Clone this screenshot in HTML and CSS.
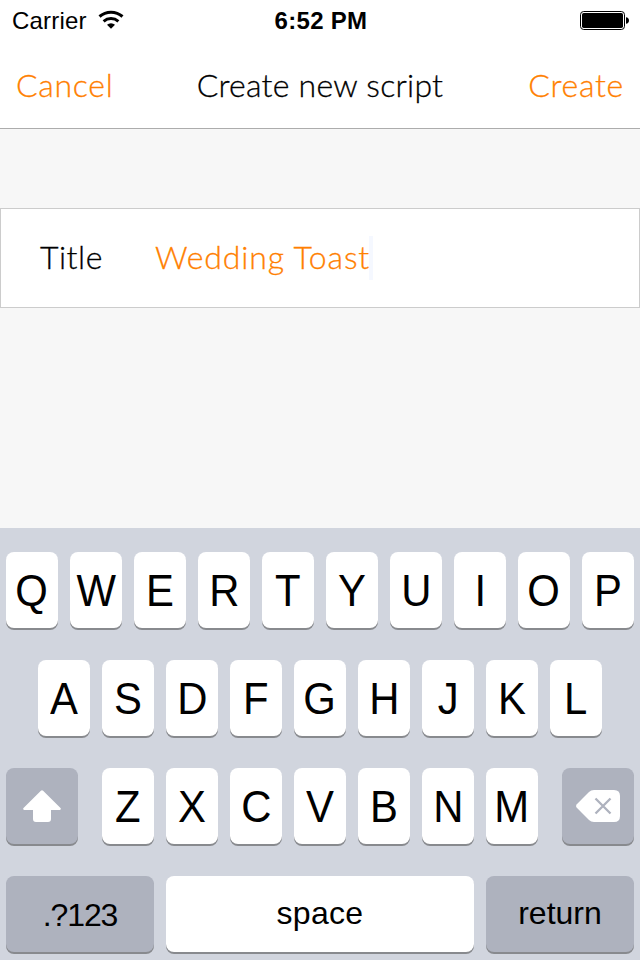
FILE: index.html
```html
<!DOCTYPE html>
<html lang="en">
<head>
<meta charset="utf-8">
<title>Create new script</title>
<link rel="stylesheet" href="styles.css">
</head>
<body>
<header class="top">
  <div class="status">
    <div class="carrier"><span class="carrier-name">Carrier</span>
      <svg class="wifi" width="26" height="20" viewBox="0 0 26 20"><g fill="none" stroke="#000" stroke-width="3"><path d="M1.500 6.500a17.500 17.500 0 0 1 23 0"/><path d="M5.600 11.300a11.500 11.500 0 0 1 14.800 0"/></g><path d="M13 18.800l-4-4.100a6 6 0 0 1 8 0z"/></svg>
    </div>
    <span class="time">6:52 PM</span>
    <svg class="battery" width="50" height="20" viewBox="0 0 50 20"><rect x=".5" y=".5" width="44" height="18" rx="3.2" fill="#fff" stroke="#000"/><rect x="2" y="2" width="41" height="15" rx="1.7"/><path d="M46 6.2c1.8.2 3 1.4 3 3.3s-1.2 3.100-3 3.300z"/></svg>
  </div>
  <nav class="nav"><span class="action cancel">Cancel</span><h1 class="heading">Create new script</h1><span class="action create">Create</span></nav>
</header>
<main class="content">
  <div class="field"><span class="label">Title</span><span class="value">Wedding Toast</span><span class="caret"></span></div>
</main>
<section class="keyboard">
  <div class="row"><span class="key"><span class="cap">Q</span></span><span class="key"><span class="cap">W</span></span><span class="key"><span class="cap">E</span></span><span class="key"><span class="cap">R</span></span><span class="key"><span class="cap">T</span></span><span class="key"><span class="cap">Y</span></span><span class="key"><span class="cap">U</span></span><span class="key"><span class="cap">I</span></span><span class="key"><span class="cap">O</span></span><span class="key"><span class="cap">P</span></span></div>
  <div class="row"><span class="key"><span class="cap">A</span></span><span class="key"><span class="cap">S</span></span><span class="key"><span class="cap">D</span></span><span class="key"><span class="cap">F</span></span><span class="key"><span class="cap">G</span></span><span class="key"><span class="cap">H</span></span><span class="key"><span class="cap">J</span></span><span class="key"><span class="cap">K</span></span><span class="key"><span class="cap">L</span></span></div>
  <div class="row spread">
    <span class="key dark"><svg width="38" height="32" viewBox="0 0 38 32"><path fill="#fff" d="M17.900.7q1.100-1 2.200 0L37.500 18q1 1.700-.7 2H28v9q0 3-3 3H13q-3 0-3-3v-9H1.200Q-.500 19.700.5 18z"/></svg></span>
    <div class="letters"><span class="key"><span class="cap">Z</span></span><span class="key"><span class="cap">X</span></span><span class="key"><span class="cap">C</span></span><span class="key"><span class="cap">V</span></span><span class="key"><span class="cap">B</span></span><span class="key"><span class="cap">N</span></span><span class="key"><span class="cap">M</span></span></div>
    <span class="key dark"><svg width="44" height="32" viewBox="0 0 44 32"><path fill="#fff" d="M18 0H38q6 0 6 6V26q0 6-6 6H18q-3 0-5-2L.8 17.800Q-.7 16 .8 14.200L13 2q2-2 5-2z"/><path d="M19.500 8.500l15 15m0-15l-15 15" stroke="#aeb2be" stroke-width="2.300"/></svg></span>
  </div>
  <div class="row"><span class="key dark word numbers">.?123</span><span class="key word space">space</span><span class="key dark word return">return</span></div>
</section>
</body>
</html>
```
FILE: styles.css
```css
* { box-sizing: border-box; }
body {
  margin: 0;
  width: 640px;
  height: 960px;
  display: flex;
  flex-direction: column;
  overflow: hidden;
  background: #f7f7f7;
  color: #000;
  font-family: "Liberation Sans", Arial, sans-serif;
}
.top { height: 129px; background: #fff; border-bottom: 1px solid #acacac; }
.status {
  height: 40px;
  display: grid;
  grid-template-columns: 1fr auto 1fr;
  align-items: center;
  padding: 0 10px 0 12px;
  font-size: 24px;
}
.carrier { display: flex; align-items: center; gap: 11px; }
.carrier-name { letter-spacing: 0.200px; padding-top: 2px; }
.time { font-weight: 700; font-size: 24px; letter-spacing: 0.300px; padding-top: 2px; }
.wifi { margin-bottom: 1px; }
.battery { justify-self: end; margin-top: 1px; }
.nav {
  height: 88px;
  padding: 0 16px;
  display: grid;
  grid-template-columns: 1fr auto 1fr;
  align-items: center;
  font-family: Lato, sans-serif;
  font-weight: 300;
  font-size: 32px;
  white-space: nowrap;
  -webkit-text-stroke: 0.300px currentColor;
}
.heading { margin: 0; font: inherit; letter-spacing: 0.250px; }
.action { color: #ff8000; letter-spacing: 0.700px; }
.create { justify-self: end; }
.content { height: 399px; padding-top: 79px; }
.field {
  height: 100px;
  display: flex;
  align-items: center;
  padding-left: 39px;
  background: #fff;
  border: 1px solid #ccc;
  font-family: Lato, sans-serif;
  font-weight: 300;
  font-size: 32px;
  letter-spacing: 0.700px;
  white-space: nowrap;
  -webkit-text-stroke: 0.300px currentColor;
}
.label { width: 115px; padding-bottom: 4px; letter-spacing: 0.500px; }
.value { width: 214px; padding-bottom: 4px; color: #ff8000; letter-spacing: 0.850px; }
.caret { width: 4px; height: 44px; background: #f5f8ff; }
.keyboard {
  height: 432px;
  padding: 24px 6px 0;
  display: flex;
  flex-direction: column;
  gap: 32px;
  background: #d1d5de;
}
.row, .letters { display: flex; justify-content: center; gap: 12px; }
.spread { justify-content: space-between; }
.key {
  width: 52px;
  height: 76px;
  display: flex;
  align-items: center;
  justify-content: center;
  border-radius: 8px;
  background: #fff;
  box-shadow: 0 2px 0 #888a8e;
  font-size: 45px;
  line-height: 76px;
}
.cap { padding-top: 2px; transform: scaleX(0.93); }
.dark { width: 72px; background: #aeb2be; }
.word { font-size: 32px; padding-bottom: 3px; }
.numbers, .return { width: 148px; }
.numbers { padding: 2px 0 0; letter-spacing: -1.100px; }
.space { width: 308px; letter-spacing: 0.300px; }
```
